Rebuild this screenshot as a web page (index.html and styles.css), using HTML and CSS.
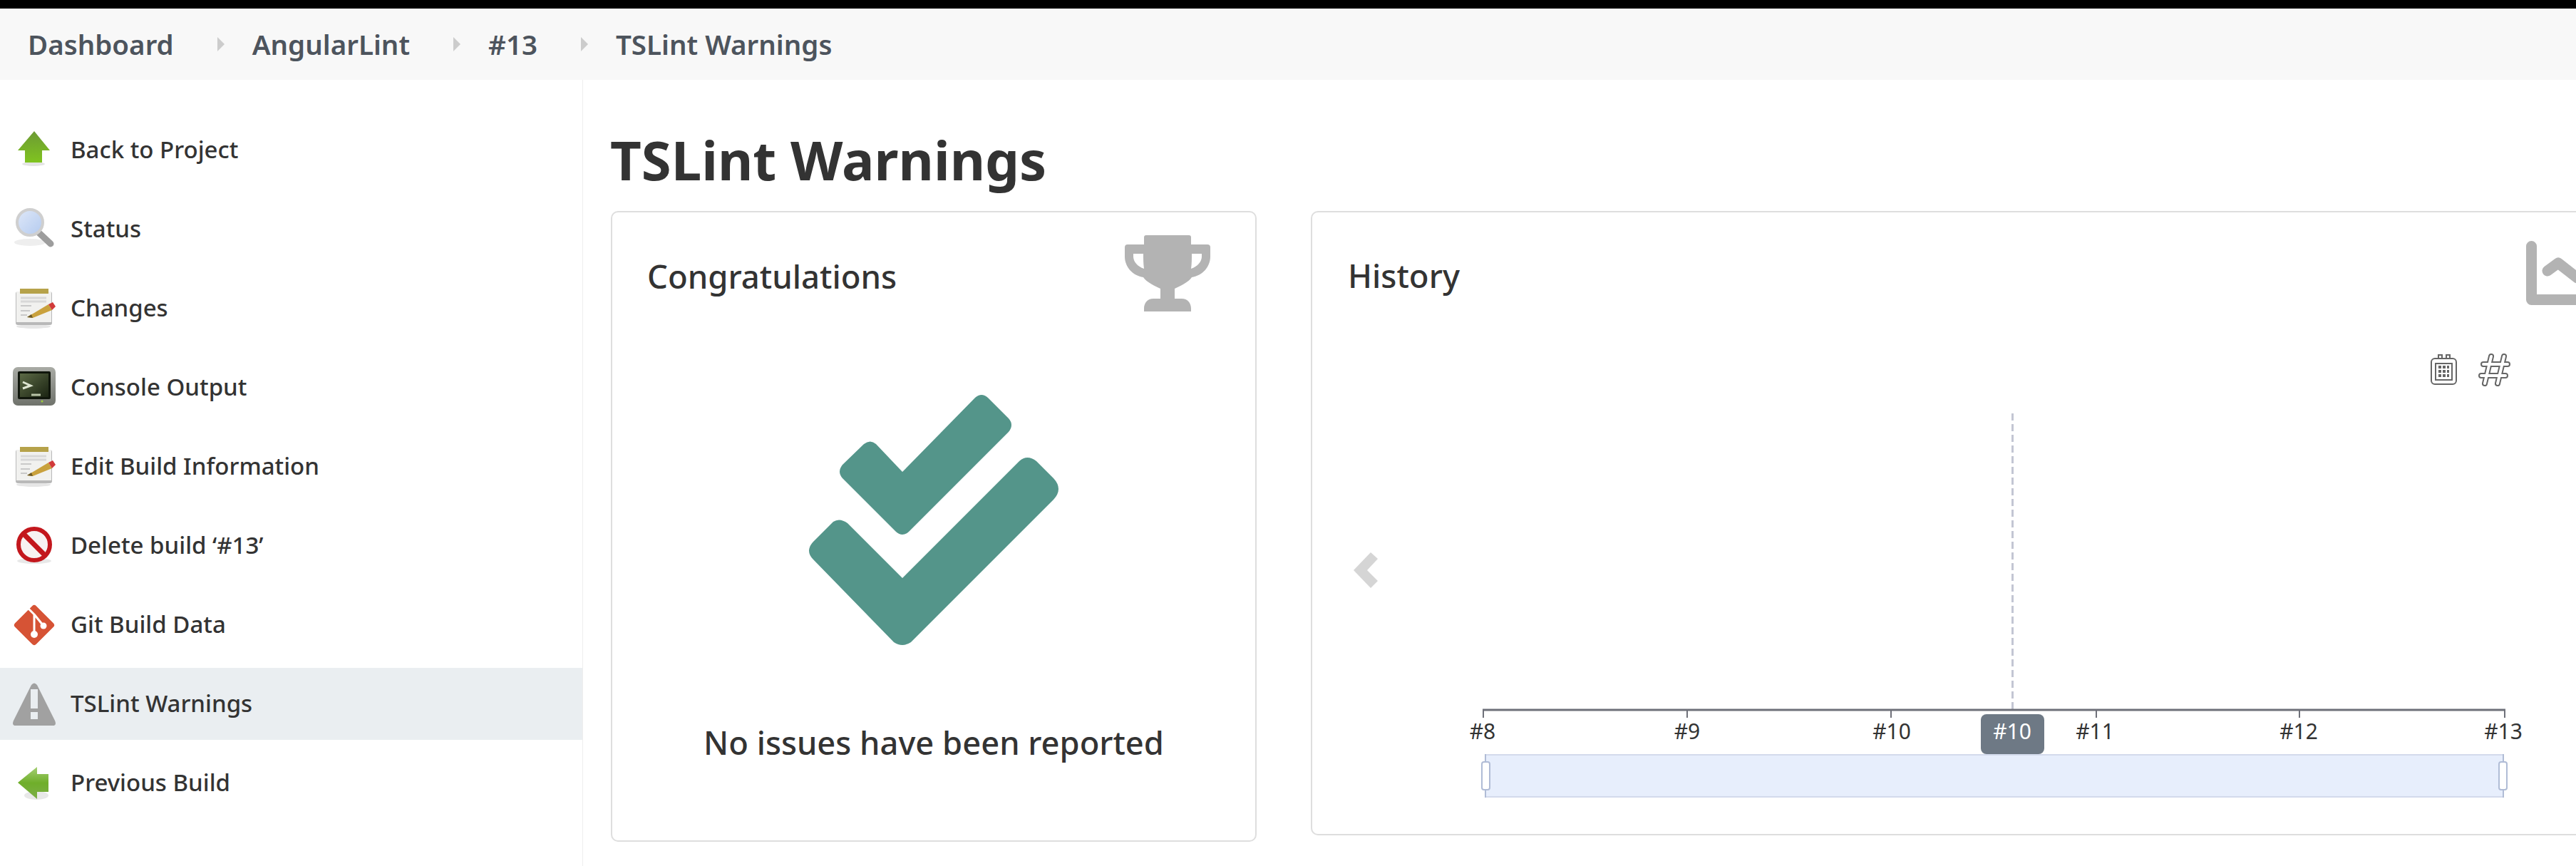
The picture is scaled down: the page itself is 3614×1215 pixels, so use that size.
FILE: index.html

```html
<!DOCTYPE html>
<html lang="en">
<head>
    <meta charset="UTF-8">
    <meta name="viewport" content="width=device-width, initial-scale=1.0">
    <title>TSLint Warnings</title>
    <link rel="stylesheet" href="styles.css">
</head>
<body>
    <svg class="sprites" width="0" height="0">
        <defs>
            <linearGradient id="green-up" x1="0" y1="0" x2="0" y2="1">
                <stop offset="0" stop-color="#6c9a34"/>
                <stop offset="1" stop-color="#80c41f"/>
            </linearGradient>
            <linearGradient id="green-left" x1="0" y1="0" x2="0" y2="1">
                <stop offset="0" stop-color="#a5cf74"/>
                <stop offset="0.5" stop-color="#6fae2a"/>
                <stop offset="1" stop-color="#7cae48"/>
            </linearGradient>
            <linearGradient id="screen" x1="0" y1="0" x2="1" y2="1">
                <stop offset="0" stop-color="#5c6a45"/>
                <stop offset="1" stop-color="#1b2413"/>
            </linearGradient>
            <linearGradient id="bezel" x1="0" y1="0" x2="0" y2="1">
                <stop offset="0" stop-color="#a9aba5"/>
                <stop offset="1" stop-color="#6f726b"/>
            </linearGradient>
            <linearGradient id="lens" x1="0" y1="0" x2="1" y2="1">
                <stop offset="0" stop-color="#dfe8f8"/>
                <stop offset="1" stop-color="#b3caef"/>
            </linearGradient>
            <symbol id="notepad" viewBox="0 0 60 60">
                <ellipse cx="29" cy="55" rx="24" ry="3" fill="#e6e6e6"/>
                <rect x="4" y="6" width="51" height="47" rx="3" fill="#b9b9b9"/>
                <rect x="5" y="6" width="49" height="43" fill="#f1f1ef"/>
                <rect x="10" y="2" width="40" height="7" fill="#b6a24a"/>
                <path d="M11 15H47M11 20H47" stroke="#d8d8d8" stroke-width="3"/>
                <path d="M11 26H26M11 33H24M11 39H20" stroke="#c9c9c9" stroke-width="2"/>
                <path d="M20 42L50 24L55 32L28 43Z" fill="#c9a13d"/>
                <path d="M20 42L26 38L28 43Z" fill="#6b5a2a"/>
                <path d="M50 24L56 21L60 27L55 32Z" fill="#d13a3a"/>
            </symbol>
        </defs>
    </svg>

    <div class="top-strip"></div>

    <nav class="breadcrumbs">
        <a href="#">Dashboard</a>
        <span class="crumb-sep"></span>
        <a href="#">AngularLint</a>
        <span class="crumb-sep"></span>
        <a href="#">#13</a>
        <span class="crumb-sep"></span>
        <a href="#">TSLint Warnings</a>
    </nav>

    <div class="page">
        <aside class="sidebar">
            <a class="task" href="#">
                <svg class="task-icon" viewBox="0 0 60 60">
                    <ellipse cx="29" cy="49" rx="16" ry="3" fill="#e4e4e4"/>
                    <path d="M30 3L52 30H41V47H17V30H7Z" fill="url(#green-up)"/>
                </svg>
                Back to Project
            </a>
            <a class="task" href="#">
                <svg class="task-icon" viewBox="0 0 60 60">
                    <ellipse cx="24" cy="48" rx="22" ry="5" fill="#eeeeee"/>
                    <path d="M36 34L53 50" stroke="#9d9d9d" stroke-width="9" stroke-linecap="round"/>
                    <circle cx="24" cy="20" r="18" fill="url(#lens)" stroke="#cfcfcf" stroke-width="4"/>
                </svg>
                Status
            </a>
            <a class="task" href="#">
                <svg class="task-icon"><use href="#notepad"/></svg>
                Changes
            </a>
            <a class="task" href="#">
                <svg class="task-icon" viewBox="0 0 60 60">
                    <rect x="0" y="1" width="60" height="54" rx="7" fill="url(#bezel)"/>
                    <rect x="7" y="7" width="46" height="39" rx="2" fill="#10160c"/>
                    <rect x="10" y="10" width="40" height="33" fill="url(#screen)"/>
                    <path d="M14 22L25 27L14 31" fill="none" stroke="#dfe6d2" stroke-width="3"/>
                    <path d="M26 40H39" stroke="#b9c4a8" stroke-width="3"/>
                    <circle cx="41" cy="49" r="1.5" fill="#9ccf3a"/>
                </svg>
                Console Output
            </a>
            <a class="task" href="#">
                <svg class="task-icon"><use href="#notepad"/></svg>
                Edit Build Information
            </a>
            <a class="task" href="#">
                <svg class="task-icon" viewBox="0 0 60 60">
                    <ellipse cx="30" cy="51" rx="24" ry="4" fill="#e8e8e8"/>
                    <circle cx="30" cy="28" r="22" fill="#f7f2f2" stroke="#c3171d" stroke-width="6"/>
                    <path d="M15 13L45 43" stroke="#c3171d" stroke-width="7"/>
                </svg>
                Delete build ‘#13’
            </a>
            <a class="task" href="#">
                <svg class="task-icon" viewBox="0 0 60 60">
                    <rect x="9" y="9" width="42" height="42" rx="4" transform="rotate(45 30 30)" fill="#d65335"/>
                    <path d="M22 7L30 15V43M30 15L43 31" fill="none" stroke="#ffffff" stroke-width="3"/>
                    <circle cx="30" cy="43" r="5" fill="#ffffff"/>
                    <circle cx="43" cy="31" r="4.5" fill="#ffffff"/>
                </svg>
                Git Build Data
            </a>
            <a class="task task-active" href="#">
                <svg class="task-icon" viewBox="0 0 60 60">
                    <path fill-rule="evenodd" fill="#a1a1a1" d="M26 3Q30 -2 34 3L59 53Q62 60 56 60H4Q-2 60 1 53ZM25 9V36H35V9ZM25 41V51H35V41Z"/>
                </svg>
                TSLint Warnings
            </a>
            <a class="task" href="#">
                <svg class="task-icon" viewBox="0 0 60 60">
                    <ellipse cx="33" cy="47" rx="17" ry="6" fill="#e8e8e8"/>
                    <path d="M7 29L34 7V17H50V42H34V52Z" fill="url(#green-left)"/>
                </svg>
                Previous Build
            </a>
        </aside>

        <main class="content">
            <h1>TSLint Warnings</h1>
            <div class="cards">
                <section class="card card-summary">
                    <div class="card-head">
                        <h2>Congratulations</h2>
                        <svg class="head-icon" width="120" height="107" viewBox="0 0 120 107">
                            <path fill="#b3b3b3" fill-rule="evenodd" d="M30 0H90Q93 0 93 3V13H116Q120 13 120 17V30C120 45 108 57 94 59C90 66 76 72 70 75V89H80C88 89 93 95 93 103V107H27V103C27 95 32 89 40 89H50V75C44 72 30 66 26 59C12 57 0 45 0 30V17Q0 13 4 13H27V3Q27 0 30 0ZM12 26V30C12 37 18 44 27 47C26 40 26 33 26 26ZM108 26V30C108 37 102 44 93 47C94 40 94 33 94 26Z"/>
                        </svg>
                    </div>
                    <svg class="big-check" width="350" height="351" viewBox="0 0 350 351">
                        <path fill="#54958a" d="M131 108L233 4Q242 -4 251 4L280 33Q288 42 280 52L140 192Q131 200 122 192L47 117Q39 108 47 98L77 69Q86 62 94 69Z"/>
                        <path fill="#54958a" d="M131 257L295 93Q306 83 319 93L343 117Q357 132 343 147L143 347Q131 355 119 347L6 231Q-6 219 6 206L34 178Q43 172 54 180Z"/>
                    </svg>
                    <p class="no-issues">No issues have been reported</p>
                </section>

                <section class="card card-history">
                    <div class="card-head">
                        <h2>History</h2>
                        <svg class="head-icon" width="120" height="90" viewBox="0 0 120 90">
                            <path fill="none" stroke="#b3b3b3" stroke-width="15" stroke-linejoin="round" stroke-linecap="round" d="M7.5 7.5V82.5H113"/>
                            <path fill="none" stroke="#b3b3b3" stroke-width="15" stroke-linejoin="round" stroke-linecap="round" d="M30 42L45 31L72 52L105 20"/>
                        </svg>
                    </div>
                    <svg class="chart" width="1773" height="690" viewBox="1841 480 1773 690">
                        <!-- toolbox -->
                        <g class="tool">
                            <rect x="3411" y="503" width="35" height="36" rx="5"/>
                            <path d="M3421 503V498H3426V503M3432 503V498H3437V503"/>
                            <rect x="3417" y="510" width="23" height="23"/>
                            <path class="tool-dots" d="M3421 515H3436M3421 521H3436M3421 527H3436"/>
                        </g>
                        <path class="hash-outer" d="M3495 500L3486 538M3513 500L3504 538M3484 511H3518M3481 527H3515"/>
                        <path class="hash-inner" d="M3495 500L3486 538M3513 500L3504 538M3484 511H3518M3481 527H3515"/>

                        <polygon class="chevron" points="1899,800 1923,775 1933,784 1918,800 1933,815 1923,825"/>
                        <path class="cursor-line" d="M2823.5 580V996"/>

                        <!-- x axis -->
                        <path class="axis" d="M2080 996H3515"/>
                        <path class="axis-tick" d="M2081 996V1007M2367 996V1007M2653 996V1007M2941 996V1007M3226 996V1007M3514 996V1007"/>
                        <text class="axis-label" x="2080" y="1037">#8</text>
                        <text class="axis-label" x="2367" y="1037">#9</text>
                        <text class="axis-label" x="2654" y="1037">#10</text>
                        <text class="axis-label" x="2939" y="1037">#11</text>
                        <text class="axis-label" x="3225" y="1037">#12</text>
                        <text class="axis-label" x="3512" y="1037">#13</text>

                        <rect class="axis-pointer" x="2779" y="1002" width="89" height="56" rx="8"/>
                        <text class="axis-pointer-label" x="2823" y="1037">#10</text>

                        <!-- zoom slider -->
                        <rect class="slider" x="2084" y="1059" width="1428" height="59"/>
                        <path class="slider-edge" d="M2084 1058V1119M3512 1058V1119"/>
                        <rect class="slider-handle" x="2079" y="1069" width="11" height="39" rx="3"/>
                        <rect class="slider-handle" x="3506" y="1069" width="11" height="39" rx="3"/>
                    </svg>
                </section>
            </div>
        </main>
    </div>
</body>
</html>
```

FILE: styles.css

```css
:root {
    --text-color: #333;
    --crumb-color: #4d545d;
    --line-color: #dedede;
    --active-bg: #eaeef1;
    --axis-color: #6e7079;
}

html, body {
    margin: 0;
    height: 1215px;
    overflow: hidden;
}

body {
    font-family: "Noto Sans", "Open Sans", sans-serif;
    color: var(--text-color);
    background-color: white;
}

a { color: inherit; text-decoration: none; }

.sprites { position: absolute; }

.top-strip { height: 12px; background-color: black; }

.breadcrumbs {
    height: 100px;
    padding-left: 39px;
    display: flex;
    align-items: center;
    background-color: #f8f8f8;
    color: var(--crumb-color);
    font-size: 38.5px;
    font-weight: 600;
}
.crumb-sep {
    width: 0;
    height: 0;
    margin: 0 39px 0 61px;
    border-left: 10px solid #cccccc;
    border-top: 10px solid transparent;
    border-bottom: 10px solid transparent;
}

.page { display: flex; height: 1103px; }

.sidebar {
    width: 817px;
    flex-shrink: 0;
    padding-top: 48px;
    display: flex;
    flex-direction: column;
    gap: 10px;
    border-right: 1px solid #eeeeee;
}
.task {
    height: 98px;
    padding: 0 0 3px 18px;
    display: flex;
    align-items: center;
    gap: 21px;
    font-size: 33px;
    font-weight: 500;
}
.task-active { background-color: var(--active-bg); }
.task-icon { width: 60px; height: 60px; margin-top: 3px; flex-shrink: 0; filter: blur(0.7px); }

.content { padding-left: 38px; }

h1 {
    margin: 0;
    padding-top: 70px;
    margin-bottom: 30px;
    font-size: 76px;
    line-height: 84px;
    font-weight: 700;
}

.cards { display: flex; align-items: flex-start; gap: 76px; margin-left: 1px; }

.card {
    box-sizing: border-box;
    border: 2px solid var(--line-color);
    border-radius: 10px;
    background-color: white;
}
.card-summary { width: 906px; display: flex; flex-direction: column; align-items: center; padding-bottom: 112px; }
.card-history { width: 1890px; }

.card-head {
    align-self: stretch;
    display: flex;
    justify-content: space-between;
    align-items: center;
    padding: 32px 63px 0 49px;
}
.card-history .card-head { padding: 40px 63px 0 50px; }
.card-head h2 { margin: 6px 0 0; font-size: 45.5px; font-weight: 500; }
.head-icon { display: block; flex-shrink: 0; }

.big-check { display: block; margin-top: 117px; overflow: visible; }
.no-issues {
    margin: 112px 0 0;
    font-size: 45.3px;
    line-height: 50px;
    font-weight: 500;
}

.chart { display: block; margin-top: 52px; }
.chart text { font-size: 30px; text-anchor: middle; }

.tool { fill: none; stroke: #666; stroke-width: 2; }
.tool-dots { stroke-width: 4; stroke-dasharray: 4 2; }
.hash-outer { fill: none; stroke: #666; stroke-width: 8; stroke-linecap: round; }
.hash-inner { fill: none; stroke: white; stroke-width: 4; stroke-linecap: round; }

.chevron { fill: #d5d5d5; }
.cursor-line { stroke: #c3c6d3; stroke-width: 3; stroke-dasharray: 10 5; }

.axis { stroke: var(--axis-color); stroke-width: 3; }
.axis-tick { stroke: var(--axis-color); stroke-width: 2; }
.axis-label { fill: var(--text-color); }
.axis-pointer { fill: #6e7985; }
.axis-pointer-label { fill: white; }

.slider { fill: #e7eefc; stroke: #d3daec; stroke-width: 2; }
.slider-edge { stroke: #b0bcd6; stroke-width: 2; }
.slider-handle { fill: white; stroke: #b0bcd6; stroke-width: 2; }
```
